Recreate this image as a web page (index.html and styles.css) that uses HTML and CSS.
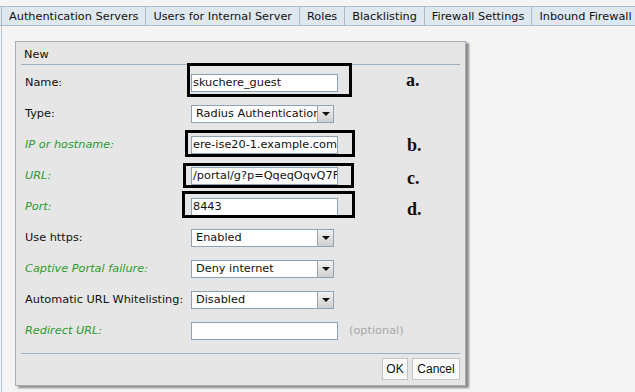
FILE: index.html
```html
<!DOCTYPE html>
<html>
<head>
<meta charset="utf-8">
<link rel="stylesheet" href="styles.css">
</head>
<body>
<div class="tabs">
  <div class="tab">Authentication Servers</div>
  <div class="tab">Users for Internal Server</div>
  <div class="tab">Roles</div>
  <div class="tab">Blacklisting</div>
  <div class="tab">Firewall Settings</div>
  <div class="tab">Inbound Firewall</div>
</div>
<div class="panel">
  <div class="dialog">
    <div class="head">New</div>
    <div class="form">
      <div class="row"><span class="lbl">Name:</span><span class="input">skuchere_guest</span></div>
      <div class="row"><span class="lbl">Type:</span><span class="select narrow"><span class="val">Radius Authentication</span><span class="btn"></span></span></div>
      <div class="row"><span class="lbl opt">IP or hostname:</span><span class="input">ere-ise20-1.example.com</span></div>
      <div class="row"><span class="lbl opt">URL:</span><span class="input">/portal/g?p=QqeqOqvQ7F</span></div>
      <div class="row"><span class="lbl opt">Port:</span><span class="input">8443</span></div>
      <div class="row"><span class="lbl">Use https:</span><span class="select"><span class="val">Enabled</span><span class="btn"></span></span></div>
      <div class="row"><span class="lbl opt">Captive Portal failure:</span><span class="select"><span class="val">Deny internet</span><span class="btn"></span></span></div>
      <div class="row"><span class="lbl">Automatic URL Whitelisting:</span><span class="select"><span class="val">Disabled</span><span class="btn"></span></span></div>
      <div class="row"><span class="lbl opt">Redirect URL:</span><span class="input"></span><span class="hint">(optional)</span></div>
    </div>
    <div class="foot">
      <button class="b">OK</button>
      <button class="b">Cancel</button>
    </div>
    <div class="mark mark-a"></div>
    <div class="mark mark-b"></div>
    <div class="mark mark-c"></div>
    <div class="mark mark-d"></div>
    <div class="note note-a">a.</div>
    <div class="note note-b">b.</div>
    <div class="note note-c">c.</div>
    <div class="note note-d">d.</div>
  </div>
</div>
</body>
</html>
```
FILE: styles.css
```css
* { box-sizing: border-box; }
html, body { margin: 0; padding: 0; }
body {
  background: #f4f4f4;
  font-family: "DejaVu Sans", Verdana, sans-serif;
  font-size: 11.3px;
  color: #111;
  width: 635px;
  height: 392px;
  overflow: hidden;
}
.tabs {
  margin-top: 6px;
  display: flex;
  background: #dfe8ee;
  border-top: 1px solid #a8bccb;
  border-bottom: 1px solid #a8bccb;
  height: 20px;
  white-space: nowrap;
}
.tab {
  padding: 1px 7px 0 7px;
  line-height: 18px;
  border-left: 1px solid #a8bccb;
}
.tab:first-child { margin-left: 1px; }
.panel {
  margin-left: 1px;
  border-left: 1px solid #b9c7d2;
  padding: 15px 0 0 13px;
  height: 366px;
}
.dialog {
  position: relative;
  width: 451px;
  height: 345px;
  background: #e6e6e6;
  border: 1px solid #a2aeb8;
  box-shadow: 3px 2px 2px #8a8a8a;
}
.head {
  margin: 0 5px 0 5px;
  padding: 6px 0 0 3px;
  height: 23px;
  border-bottom: 1px solid #9fb0c0;
  line-height: 14px;
}
.form { padding: 2px 0 0 9px; }
.row {
  display: flex;
  align-items: center;
  height: 31px;
  white-space: nowrap;
}
.lbl { width: 166px; flex: none; }
.opt { color: #2f9a2f; font-style: italic; }
.input {
  width: 147px;
  height: 18px;
  background: #fff;
  border: 1px solid #8ea2b5;
  padding-left: 1px;
  line-height: 16px;
  overflow: hidden;
  white-space: nowrap;
}
.select {
  display: flex;
  width: 143px;
  height: 18px;
  background: #fff;
  border: 1px solid #8ea2b5;
}
.select .val {
  flex: 1;
  padding-left: 4px;
  line-height: 16px;
  overflow: hidden;
  white-space: nowrap;
}
.select .btn {
  width: 16px;
  flex: none;
  background: linear-gradient(#f2f2f2, #cfcfcf);
  border-left: 1px solid #9aa6b0;
  position: relative;
}
.select .btn::after {
  content: "";
  position: absolute;
  left: 4px;
  top: 6px;
  border-left: 4px solid transparent;
  border-right: 4px solid transparent;
  border-top: 4px solid #111;
}
.hint { color: #a6a6a6; margin-left: 11px; }
.foot {
  margin: 7px 5px 0 5px;
  border-top: 1px solid #9fb0c0;
  display: flex;
  justify-content: flex-end;
  gap: 4px;
  padding-top: 4px;
}
.b {
  font-family: "Liberation Sans", Arial, sans-serif;
  font-size: 12px;
  height: 22px;
  padding: 0;
  background: #fafafa;
  border: 1px solid #c4c4c4;
  color: #111;
}
.b:first-child { width: 26px; }
.b:last-child { width: 48px; }
.mark {
  position: absolute;
  border: 3px solid #000;
}
.mark-a { left: 171px; top: 21px; width: 165px; height: 34px; }
.mark-b { left: 169px; top: 88px; width: 170px; height: 27px; }
.mark-c { left: 167px; top: 121px; width: 171px; height: 25px; }
.mark-d { left: 166px; top: 149px; width: 173px; height: 27px; }
.note {
  position: absolute;
  font-family: "Liberation Serif", "Times New Roman", serif;
  font-weight: bold;
  font-size: 18px;
  line-height: 18px;
}
.note-a { left: 390px; top: 29px; }
.note-b { left: 391px; top: 94px; }
.note-c { left: 391px; top: 127px; }
.note-d { left: 391px; top: 158px; }
```
